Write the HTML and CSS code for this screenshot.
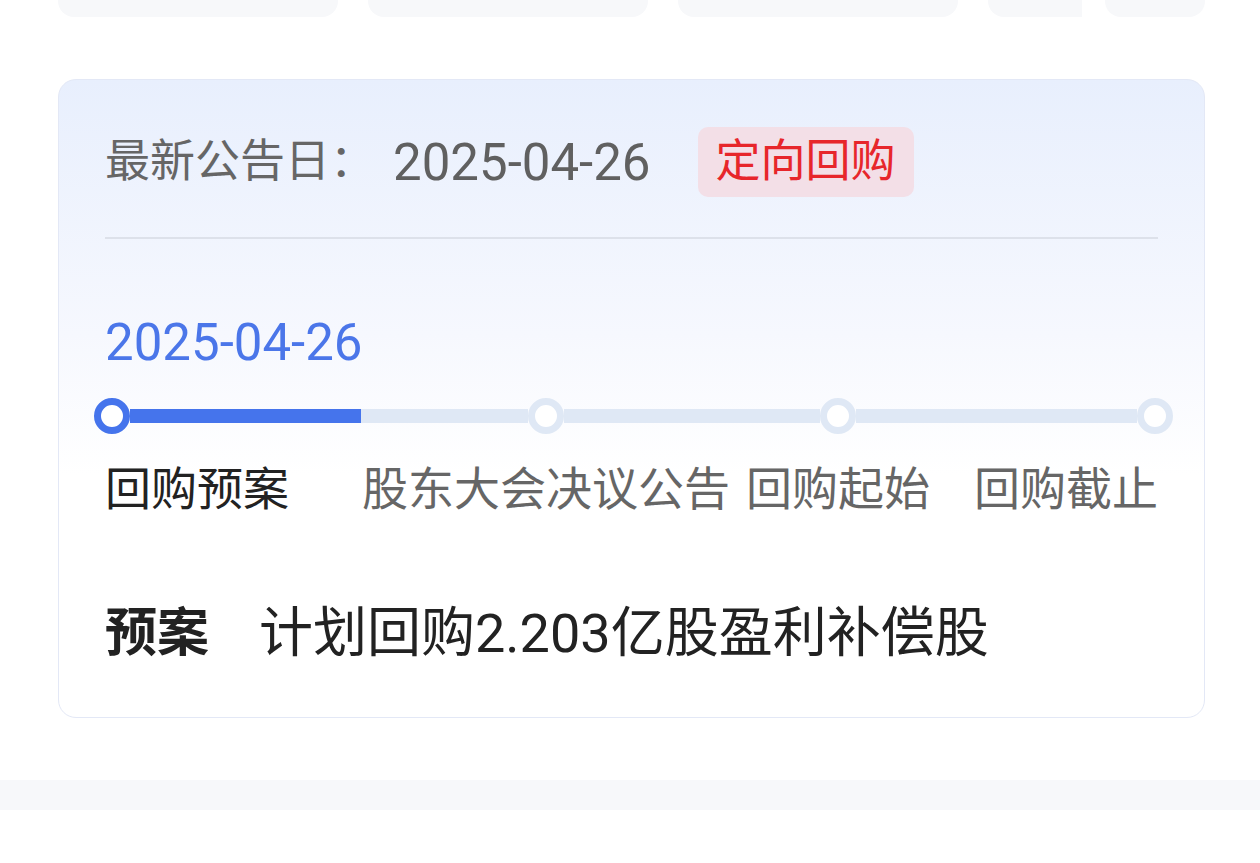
FILE: index.html
```html
<!DOCTYPE html>
<html lang="zh-CN">
   <head>
      <meta charset="UTF-8">
      <meta name="viewport" content="width=device-width, initial-scale=1.0">
      <title>回购进度</title>
      <link rel="stylesheet" href="styles.css">
   </head>
   <body>
      <!-- tabs above, scrolled mostly out of view -->
      <div class="top-strip">
         <div class="scroller">
            <div class="chip"></div>
            <div class="chip"></div>
            <div class="chip"></div>
            <div class="chip"></div>
         </div>
         <div class="chip chip-more"></div>
      </div>

      <div class="buyback-card">
         <div class="card-head">
            <span class="head-label">最新公告日：</span>
            <span class="head-date">2025-04-26</span>
            <span class="tag">定向回购</span>
         </div>
         <div class="divider"></div>

         <div class="step-date">2025-04-26</div>

         <div class="timeline">
            <div class="node node-active"></div>
            <div class="segment seg-1"><div class="segment-fill" style="width: 58%"></div></div>
            <div class="node"></div>
            <div class="segment seg-2"></div>
            <div class="node"></div>
            <div class="segment seg-3"></div>
            <div class="node"></div>
         </div>

         <div class="step-labels">
            <span class="step-label step-current first">回购预案</span>
            <span class="step-label mid">股东大会决议公告</span>
            <span class="step-label mid">回购起始</span>
            <span class="step-label last">回购截止</span>
         </div>

         <div class="plan-row">
            <span class="plan-title">预案</span>
            <span class="plan-text">计划回购<span class="num">2.203</span>亿股盈利补偿股</span>
         </div>
      </div>

      <div class="section-gap"></div>
   </body>
</html>
```

FILE: styles.css
```css
body {
margin: 0;
padding: 0;
background-color: #ffffff;
font-family: "Noto Sans CJK SC", "Noto Sans", sans-serif;
color: #222222;
}
.top-strip {
display: flex;
height: 17px;
padding-left: 58px;
}
.scroller {
display: flex;
gap: 30px;
width: 1024px;
overflow: hidden;
}
.chip {
flex: 0 0 280px;
height: 17px;
background-color: #f7f8fa;
border-radius: 0 0 16px 16px;
}
.chip-more {
flex: 0 0 100px;
margin-left: 23px;
}
.buyback-card {
box-sizing: border-box;
width: 1147px;
margin: 62px 0 0 58px;
padding: 47px 46px 48px 46px;
border: 1px solid #e3e8f6;
border-radius: 18px;
background: linear-gradient(180deg, #e8effd 0%, #f6f8fe 40%, #ffffff 62%);
}
.card-head {
display: flex;
align-items: center;
height: 70px;
}
.head-label {
font-size: 45px;
line-height: 62px;
padding-bottom: 8px;
color: #666666;
}
.head-date {
margin-left: 18px;
font-family: Roboto, "Noto Sans", sans-serif;
font-size: 51px;
color: #606060;
}
.tag {
margin-left: 47px;
height: 62px;
line-height: 62px;
padding: 0 18px 8px 18px;
border-radius: 10px;
background-color: #f3dfe7;
color: #e7262b;
font-size: 45px;
}
.divider {
margin-top: 40px;
height: 2px;
background-color: #dde1ea;
}
.step-date {
margin-top: 74px;
font-family: Roboto, "Noto Sans", sans-serif;
font-size: 51px;
line-height: 60px;
color: #4b76e9;
}
.timeline {
display: flex;
align-items: center;
height: 36px;
margin: 25px -15px 0 -11px;
}
.node {
flex: 0 0 auto;
box-sizing: border-box;
width: 36px;
height: 36px;
border: 7px solid #dfe8f5;
border-radius: 50%;
background-color: #ffffff;
}
.node-active {
border-color: #4574ec;
}
.segment {
flex-basis: 0;
height: 14px;
background-color: #dfe8f5;
}
.seg-1 { flex-grow: 398; }
.seg-2 { flex-grow: 256; }
.seg-3 { flex-grow: 281; }
.segment-fill {
height: 100%;
background-color: #4574ec;
}
.step-labels {
display: grid;
grid-template-columns: 257px 368px 216px 1fr;
margin-top: 21px;
font-size: 46px;
line-height: 60px;
color: #666666;
white-space: nowrap;
}
.step-label.first { justify-self: start; }
.step-label.mid { justify-self: center; }
.step-label.last { justify-self: end; }
.step-current {
color: #222222;
}
.plan-row {
display: flex;
margin-top: 79px;
font-size: 52px;
line-height: 70px;
color: #222222;
}
.plan-title {
font-weight: bold;
}
.plan-text {
margin-left: 50px;
font-size: 54px;
}
.num {
font-family: Roboto, "Noto Sans", sans-serif;
}
.section-gap {
margin-top: 62px;
height: 30px;
background-color: #f7f8fa;
}
```
